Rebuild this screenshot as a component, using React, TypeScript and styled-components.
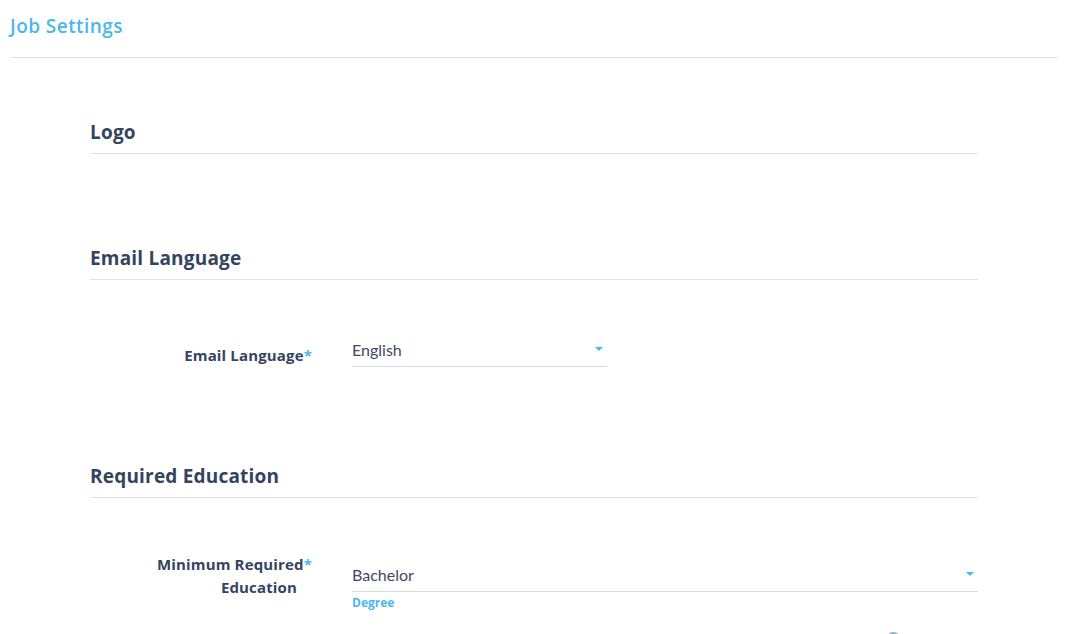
import styled, { createGlobalStyle } from "styled-components";

const GlobalStyle = createGlobalStyle`
  html, body {
    margin: 0;
    padding: 0;
    background: #ffffff;
    font-family: Lato, "Open Sans", sans-serif;
    color: #34445f;
    overflow: hidden;
  }
`;

const Page = styled.div`
  width: 1068px;
  height: 634px;
  overflow: hidden;
`;

const Header = styled.header`
  margin: 0 10px;
  padding: 14px 0 19px;
  border-bottom: 1px solid #e2e2e2;
`;

const HeaderTitle = styled.h1`
  margin: 0;
  font-family: "Open Sans", Lato, sans-serif;
  font-size: 19px;
  line-height: 24px;
  font-weight: 600;
  letter-spacing: 0.45px;
  color: #4ab8ea;
`;

const Content = styled.main`
  padding: 0 90px;
`;

const Section = styled.section<{ $gap: number }>`
  margin-top: ${({ $gap }) => $gap}px;
`;

const SectionTitle = styled.h2`
  margin: 0;
  padding-bottom: 9px;
  font-family: "Open Sans", Lato, sans-serif;
  font-size: 19px;
  line-height: 24px;
  font-weight: 700;
  letter-spacing: 0.2px;
  color: #34445f;
  border-bottom: 1px solid #e2e2e2;
`;

const Row = styled.div<{ $gap: number }>`
  display: flex;
  align-items: flex-start;
  gap: 40px;
  margin-top: ${({ $gap }) => $gap}px;
`;

const Label = styled.label<{ $shift: number }>`
  flex: 0 0 222px;
  margin-top: ${({ $shift }) => $shift}px;
  text-align: right;
  font-family: "Open Sans", Lato, sans-serif;
  font-size: 15px;
  line-height: 23px;
  font-weight: 700;
  letter-spacing: 0.15px;
  color: #34445f;
`;

const Required = styled.span`
  color: #4ab8ea;
`;

const TailLine = styled.span`
  display: inline-block;
  padding-right: 15px;
`;

const Field = styled.div<{ $width?: number }>`
  ${({ $width }) => ($width ? `flex: 0 0 ${$width}px;` : "flex: 1;")}
`;

const Select = styled.div`
  display: flex;
  align-items: center;
  justify-content: space-between;
  padding: 0 4px 4px 0;
  border-bottom: 1px solid #d6d9e1;
  font-size: 16px;
  line-height: 24px;
  color: #3d4a62;
`;

const Caret = styled.span`
  width: 0;
  height: 0;
  margin-top: -2px;
  border-left: 4.5px solid transparent;
  border-right: 4.5px solid transparent;
  border-top: 4.5px solid #4ab8ea;
`;

const Helper = styled.div`
  margin-top: 4px;
  font-family: "Open Sans", Lato, sans-serif;
  font-size: 12px;
  line-height: 14px;
  font-weight: 700;
  color: #4ab8ea;
`;

const NextRow = styled.div`
  display: flex;
  justify-content: flex-end;
  margin-top: 22px;
  padding-right: 77px;
`;

const Dot = styled.span`
  width: 13px;
  height: 13px;
  border-radius: 50%;
  border: 1px solid #9aa3b3;
  box-shadow: inset 0 2px 0 #4ab8ea;
`;

export default function App() {
  return (
    <Page>
      <GlobalStyle />
      <Header>
        <HeaderTitle>Job Settings</HeaderTitle>
      </Header>
      <Content>
        <Section $gap={62}>
          <SectionTitle>Logo</SectionTitle>
        </Section>

        <Section $gap={92}>
          <SectionTitle>Email Language</SectionTitle>
          <Row $gap={58}>
            <Label $shift={6}>
              Email Language<Required>*</Required>
            </Label>
            <Field $width={255}>
              <Select>
                <span>English</span>
                <Caret />
              </Select>
            </Field>
          </Row>
        </Section>

        <Section $gap={97}>
          <SectionTitle>Required Education</SectionTitle>
          <Row $gap={65}>
            <Label $shift={-10}>
              Minimum Required<Required>*</Required>
              <br />
              <TailLine>Education</TailLine>
            </Label>
            <Field>
              <Select>
                <span>Bachelor</span>
                <Caret />
              </Select>
              <Helper>Degree</Helper>
            </Field>
          </Row>
          <NextRow>
            <Dot />
          </NextRow>
        </Section>
      </Content>
    </Page>
  );
}
